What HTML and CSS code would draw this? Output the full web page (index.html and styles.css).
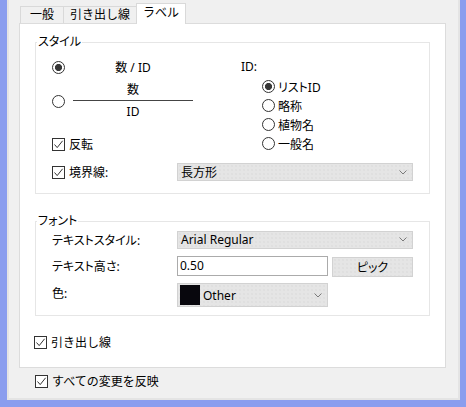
FILE: index.html
```html
<!DOCTYPE html>
<html lang="ja">
<head>
<meta charset="utf-8">
<title>ラベル</title>
<link rel="stylesheet" href="styles.css">
</head>
<body>
<div class="window">
  <div class="tabs">
    <div class="tab tab-general">一般</div>
    <div class="tab tab-leader">引き出し線</div>
    <div class="tab tab-active">ラベル</div>
  </div>
  <div class="panel">
    <fieldset class="group">
      <legend class="group-title">スタイル</legend>
      <div class="style-body">
        <div class="style-top">
          <div class="style-left">
            <div class="row row-inline">
              <span class="radio checked"></span>
              <span class="inline-label">数 / ID</span>
            </div>
            <div class="row row-fraction">
              <span class="radio"></span>
              <div class="fraction">
                <span class="num">数</span>
                <span class="bar"></span>
                <span class="den">ID</span>
              </div>
            </div>
            <div class="row row-flip">
              <span class="check"><svg viewBox="0 0 11 11" width="11" height="11"><path d="M1.5 5.5 L4.2 8.6 L9.6 1.8" fill="none" stroke="#333" stroke-width="1"/></svg></span>
              <span>反転</span>
            </div>
          </div>
          <div class="style-right">
            <div class="id-title">ID:</div>
            <div class="id-opt"><span class="radio checked"></span><span>リストID</span></div>
            <div class="id-opt"><span class="radio"></span><span>略称</span></div>
            <div class="id-opt"><span class="radio"></span><span>植物名</span></div>
            <div class="id-opt"><span class="radio"></span><span>一般名</span></div>
          </div>
        </div>
        <div class="row row-border">
          <div class="border-label">
            <span class="check"><svg viewBox="0 0 11 11" width="11" height="11"><path d="M1.5 5.5 L4.2 8.6 L9.6 1.8" fill="none" stroke="#333" stroke-width="1"/></svg></span>
            <span>境界線:</span>
          </div>
          <div class="select select-wide">
            <span>長方形</span>
            <svg class="chev" viewBox="0 0 8 5" width="8" height="5"><path d="M0.5 0.5 L4 4 L7.5 0.5" fill="none" stroke="#7a7a7a" stroke-width="1"/></svg>
          </div>
        </div>
      </div>
    </fieldset>

    <fieldset class="group group-font">
      <legend class="group-title">フォント</legend>
      <div class="font-body">
        <span class="label">テキストスタイル:</span>
        <div class="select select-wide select-short">
          <span>Arial Regular</span>
          <svg class="chev" viewBox="0 0 8 5" width="8" height="5"><path d="M0.5 0.5 L4 4 L7.5 0.5" fill="none" stroke="#7a7a7a" stroke-width="1"/></svg>
        </div>
        <span class="label">テキスト高さ:</span>
        <div class="height-ctrl">
          <div class="input">0.50</div>
          <div class="button">ピック</div>
        </div>
        <span class="label label-color">色:</span>
        <div class="select select-color">
          <span class="color-value"><span class="swatch"></span><span>Other</span></span>
          <svg class="chev" viewBox="0 0 8 5" width="8" height="5"><path d="M0.5 0.5 L4 4 L7.5 0.5" fill="none" stroke="#7a7a7a" stroke-width="1"/></svg>
        </div>
      </div>
    </fieldset>

    <div class="row row-leader">
      <span class="check"><svg viewBox="0 0 11 11" width="11" height="11"><path d="M1.5 5.5 L4.2 8.6 L9.6 1.8" fill="none" stroke="#333" stroke-width="1"/></svg></span>
      <span class="full">引き出し線</span>
    </div>
  </div>
  <div class="row row-apply">
    <span class="check"><svg viewBox="0 0 11 11" width="11" height="11"><path d="M1.5 5.5 L4.2 8.6 L9.6 1.8" fill="none" stroke="#333" stroke-width="1"/></svg></span>
    <span class="full">すべての変更を反映</span>
  </div>
</div>
</body>
</html>
```

FILE: styles.css
```css
html, body {
  margin: 0;
  padding: 0;
}

body {
  background: #8a9dee;
  font-family: "Noto Sans", "Noto Sans CJK JP", sans-serif;
  font-size: 12px;
  color: #000;
  font-feature-settings: "palt";
  height: 407px;
  overflow: hidden;
}

.full,
.tab {
  font-feature-settings: normal;
}

.window {
  box-sizing: border-box;
  width: 453px;
  height: 400px;
  margin: 0 6px 0 7px;
  background: #f0f0f0;
  border: 2px solid #e4e4e4;
  border-top: none;
}

/* tabs */
.tabs {
  display: flex;
  align-items: flex-end;
  height: 23px;
  padding-left: 11px;
}

.tab {
  box-sizing: border-box;
  height: 17px;
  border: 1px solid #d9d9d9;
  border-bottom: none;
  display: flex;
  align-items: center;
  justify-content: center;
  line-height: 1;
}

.tab + .tab {
  margin-left: -1px;
}

.tab-general {
  width: 44px;
}

.tab-leader {
  width: 74px;
}

.tab-active {
  width: 50px;
  height: 21px;
  margin-bottom: -1px;
  background: #fff;
  position: relative;
  z-index: 1;
  padding-bottom: 2px;
}

/* panel */
.panel {
  box-sizing: border-box;
  width: 427px;
  margin-left: 10px;
  background: #fff;
  border: 1px solid #dcdcdc;
  padding: 0 15px 15px 15px;
}

.group {
  margin: 11px 0 0;
  padding: 0;
  border: 1px solid #e6e6e6;
  min-width: 0;
}

.group-font {
  margin-top: 20px;
}

.group-title {
  margin-left: 1px;
  padding: 0 1px;
  line-height: 14px;
  height: 14px;
}

.row {
  display: flex;
  align-items: center;
}

/* style group */
.style-body {
  padding: 0 0 11px 16px;
}

.style-top {
  display: flex;
  padding-top: 8px;
}

.style-left {
  width: 189px;
  display: flex;
  flex-direction: column;
}

.row-inline {
  height: 20px;
}

.row-fraction {
  height: 40px;
  margin-top: 4px;
}

.row-flip {
  height: 20px;
  margin-top: 13px;
}

.inline-label {
  width: 120px;
  margin-left: 8px;
  text-align: center;
}

.fraction {
  width: 120px;
  margin-left: 8px;
  display: flex;
  flex-direction: column;
  align-items: center;
}

.num {
  height: 17px;
  line-height: 17px;
}

.bar {
  align-self: stretch;
  height: 1px;
  margin-top: 2px;
  background: #444;
}

.den {
  height: 18px;
  line-height: 18px;
  margin-top: 2px;
}

.style-right {
  display: flex;
  flex-direction: column;
}

.id-title {
  height: 20px;
  line-height: 20px;
}

.id-opt {
  height: 19px;
  display: flex;
  align-items: center;
  padding-left: 21px;
}

.id-opt .radio {
  margin-right: 3px;
}

.row-border {
  height: 20px;
  margin-top: 8px;
}

.border-label {
  width: 125px;
  display: flex;
  align-items: center;
}

/* controls */
.radio {
  box-sizing: border-box;
  width: 13px;
  height: 13px;
  border: 1px solid #333;
  border-radius: 50%;
  background: #fff;
  flex: none;
}

.radio.checked {
  background: radial-gradient(circle, #333 0, #3a3a3a 3.2px, #fff 3.9px);
}

.check {
  box-sizing: border-box;
  width: 13px;
  height: 13px;
  border: 1px solid #333;
  background: #fff;
  margin-right: 4px;
  display: flex;
  flex: none;
}

.select {
  box-sizing: border-box;
  height: 18px;
  border: 1px solid #d2d2d2;
  background-color: #e5e5e5;
  background-image: radial-gradient(circle, #d8d8d8 0.6px, transparent 0.8px);
  background-size: 4px 4px;
  display: flex;
  align-items: center;
  justify-content: space-between;
  padding: 0 5px 0 3px;
}

.select-wide {
  width: 236px;
}

.chev {
  flex: none;
}

/* font group */
.font-body {
  display: grid;
  grid-template-columns: 125px 236px;
  grid-template-rows: 19px 20px 24px;
  row-gap: 7px;
  align-items: center;
  padding: 2px 0 8px 16px;
}

.label-color {
  position: relative;
  top: -2px;
}

.height-ctrl {
  display: flex;
  gap: 4px;
  height: 20px;
}

.input {
  box-sizing: border-box;
  width: 151px;
  height: 20px;
  border: 1px solid #ababab;
  background: #fff;
  padding-left: 2px;
  line-height: 18px;
}

.button {
  box-sizing: border-box;
  width: 81px;
  height: 20px;
  margin-top: 1px;
  border: 1px solid #d2d2d2;
  background-color: #e5e5e5;
  background-image: radial-gradient(circle, #d8d8d8 0.6px, transparent 0.8px);
  background-size: 4px 4px;
  display: flex;
  align-items: center;
  justify-content: center;
}

.select-color {
  width: 151px;
  height: 24px;
  padding-left: 2px;
}

.color-value {
  display: flex;
  align-items: center;
}

.swatch {
  width: 20px;
  height: 20px;
  background: #08070d;
  margin-right: 3px;
}

.row-leader {
  height: 20px;
  margin-top: 16px;
  margin-left: -1px;
}

.row-apply {
  height: 20px;
  margin-top: 3px;
  padding-left: 26px;
}
```
